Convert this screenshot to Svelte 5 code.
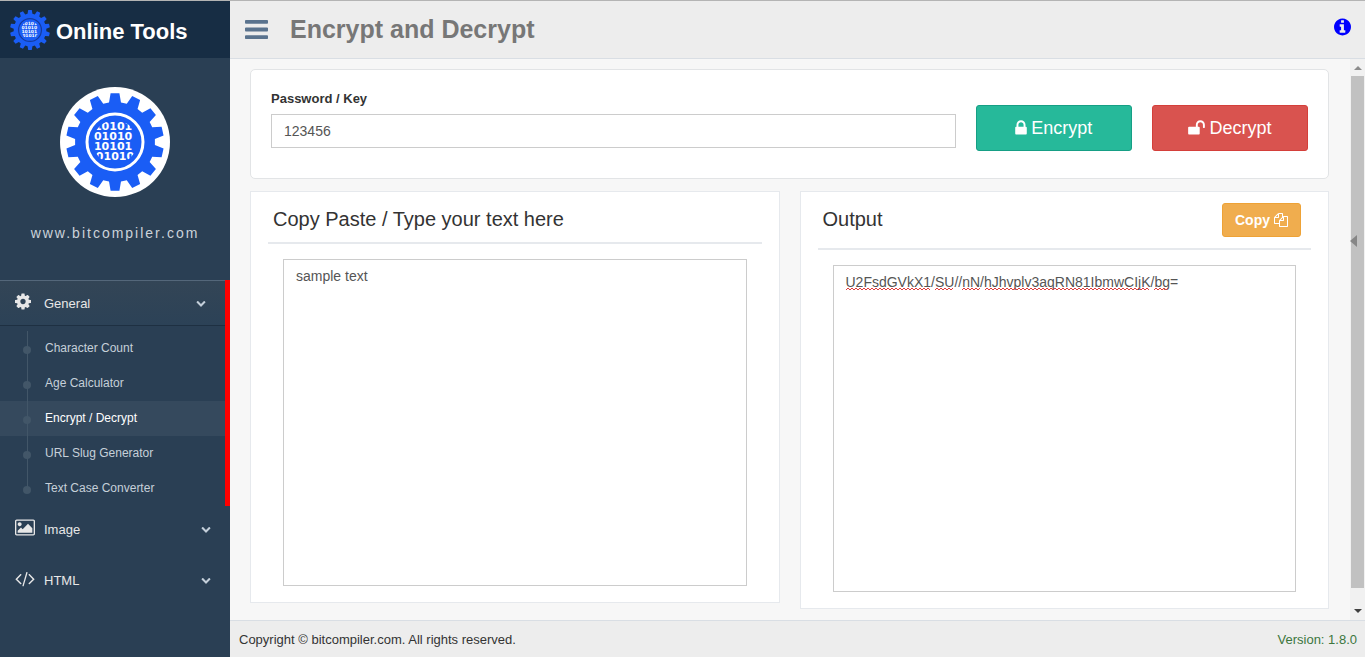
<script lang="ts">
  type MenuItem = { label: string; icon: string; children?: string[] };

  const icons: Record<string, { w: number; d: string }> = {
    lock: { w: 1152, d: 'M320 768h512v-192q0-106-75-181t-181-75-181 75-75 181v192zm832 96v576q0 40-28 68t-68 28h-960q-40 0-68-28t-28-68v-576q0-40 28-68t68-28h32v-192q0-184 132-316t316-132 316 132 132 316v192h32q40 0 68 28t28 68z' },
    unlock: { w: 1664, d: 'M1664 576v256q0 26-19 45t-45 19h-64q-26 0-45-19t-19-45v-256q0-106-75-181t-181-75-181 75-75 181v192h96q40 0 68 28t28 68v576q0 40-28 68t-68 28h-960q-40 0-68-28t-28-68v-576q0-40 28-68t68-28h672v-192q0-185 131.5-316.5t316.500-131.500 316.500 131.500 131.500 316.500z' },
    bars: { w: 1536, d: 'M1536 1344v128q0 26-19 45t-45 19h-1408q-26 0-45-19t-19-45v-128q0-26 19-45t45-19h1408q26 0 45 19t19 45zm0-512v128q0 26-19 45t-45 19h-1408q-26 0-45-19t-19-45v-128q0-26 19-45t45-19h1408q26 0 45 19t19 45zm0-512v128q0 26-19 45t-45 19h-1408q-26 0-45-19t-19-45v-128q0-26 19-45t45-19h1408q26 0 45 19t19 45z' },
    cog: { w: 1536, d: 'M1024 896q0-106-75-181t-181-75-181 75-75 181 75 181 181 75 181-75 75-181zm512-109v222q0 12-8 23t-20 13l-185 28q-19 54-39 91 35 50 107 138 10 12 10 25t-9 23q-27 37-99 108t-94 71q-12 0-26-9l-138-108q-44 23-91 38-16 136-29 186-7 28-36 28h-222q-14 0-24.500-8.500t-11.500-21.500l-28-184q-49-16-90-37l-141 107q-10 9-25 9-14 0-25-11-126-114-165-168-7-10-7-23 0-12 8-23 15-21 51-66.500t54-70.500q-27-50-41-99l-183-27q-13-2-21-12.500t-8-23.500v-222q0-12 8-23t19-13l186-28q14-46 39-92-40-57-107-138-10-12-10-24 0-10 9-23 26-36 98.500-107.500t94.500-71.500q13 0 26 10l138 107q44-23 91-38 16-136 29-186 7-28 36-28h222q14 0 24.500 8.500t11.500 21.500l28 184q49 16 90 37l142-107q9-9 24-9 13 0 25 10 129 119 165 170 7 8 7 22 0 12-8 23-15 21-51 66.500t-54 70.500q26 50 41 98l183 28q13 2 21 12.500t8 23.500z' },
    picture: { w: 1920, d: 'M640 576q0 80-56 136t-136 56-136-56-56-136 56-136 136-56 136 56 56 136zm1024 384v448h-1408v-192l320-320 160 160 512-512zm96-704h-1600q-13 0-22.500 9.500t-9.500 22.500v1216q0 13 9.500 22.500t22.500 9.500h1600q13 0 22.500-9.500t9.500-22.500v-1216q0-13-9.500-22.500t-22.500-9.500zm160 32v1216q0 66-47 113t-113 47h-1600q-66 0-113-47t-47-113v-1216q0-66 47-113t113-47h1600q66 0 113 47t47 113z' },
    code: { w: 1920, d: 'M617 1399l-50 50q-10 10-23 10t-23-10l-466-466q-10-10-10-23t10-23l466-466q10-10 23-10t23 10l50 50q10 10 10 23t-10 23l-393 393 393 393q10 10 10 23t-10 23zm591-1067l-373 1291q-4 13-15.500 19.500t-23.500 2.500l-62-17q-13-4-19.500-15.500t-2.500-24.500l373-1291q4-13 15.500-19.500t23.500-2.500l62 17q13 4 19.500 15.500t2.500 24.500zm657 651l-466 466q-10 10-23 10t-23-10l-50-50q-10-10-10-23t10-23l393-393-393-393q-10-10-10-23t10-23l50-50q10-10 23-10t23 10l466 466q10 10 10 23t-10 23z' },
    chevron: { w: 1792, d: 'M1683 808l-742 741q-19 19-45 19t-45-19l-742-741q-19-19-19-45.500t19-45.500l166-165q19-19 45-19t45 19l531 531 531-531q19-19 45-19t45 19l166 165q19 19 19 45.500t-19 45.500z' },
    info: { w: 1536, d: 'M1024 1376v-160q0-14-9-23t-23-9h-96v-512q0-14-9-23t-23-9h-320q-14 0-23 9t-9 23v160q0 14 9 23t23 9h96v320h-96q-14 0-23 9t-9 23v160q0 14 9 23t23 9h448q14 0 23-9t9-23zm-128-896v-160q0-14-9-23t-23-9h-192q-14 0-23 9t-9 23v160q0 14 9 23t23 9h192q14 0 23-9t9-23zm640 416q0 209-103 385.500t-279.500 279.500-385.500 103-385.500-103-279.500-279.500-103-385.500 103-385.500 279.500-279.500 385.500-103 385.500 103 279.500 279.500 103 385.500z' },
    copy: { w: 1792, d: 'M1696 384q40 0 68 28t28 68v1216q0 40-28 68t-68 28h-960q-40 0-68-28t-28-68v-288h-544q-40 0-68-28t-28-68v-672q0-40 20-88t48-76l408-408q28-28 76-48t88-20h416q40 0 68 28t28 68v328q68-40 128-40h416zm-544 213l-299 299h299v-299zm-640-384l-299 299h299v-299zm196 647l316-316v-416h-384v416q0 40-28 68t-68 28h-416v640h512v-256q0-40 20-88t48-76zm956 804v-1152h-384v416q0 40-28 68t-68 28h-416v640h896z' }
  };

  const menu: MenuItem[] = [
    {
      label: 'General',
      icon: 'cog',
      children: ['Character Count', 'Age Calculator', 'Encrypt / Decrypt', 'URL Slug Generator', 'Text Case Converter']
    },
    { label: 'Image', icon: 'picture' },
    { label: 'HTML', icon: 'code' }
  ];

  let openMenu = $state('General');
  let current = $state('Encrypt / Decrypt');
  let password = $state('123456');
  let input = $state('sample text');
  let output = $state('U2FsdGVkX1/SU//nN/hJhvplv3aqRN81IbmwCIjK/bg=');

  // start and end of each misspelled run in the output
  const misspelled = [[0, 85], [89, 108], [116, 134], [139, 304], [308, 323]];

  function squiggle(from: number, to: number) {
    let d = `M${from} 3`;
    for (let x = from + 2, up = true; x <= to; x += 2, up = !up) {
      d += `L${x} ${up ? 1 : 3}`;
    }
    return d;
  }

  // gear outline, one trapezoid per tooth
  function gear(teeth: number, inner: number, outer: number) {
    const pts: string[] = [];
    for (let i = 0; i < teeth; i++) {
      const a = (i * 2 * Math.PI) / teeth - Math.PI / 2;
      for (const [off, r] of [[-0.15, inner], [-0.09, outer], [0.09, outer], [0.15, inner]]) {
        pts.push(`${(r * Math.cos(a + off)).toFixed(2)},${(r * Math.sin(a + off)).toFixed(2)}`);
      }
    }
    return pts.join(' ');
  }
</script>

{#snippet icon(name: string, height: number)}
  <svg class="icon" viewBox="0 0 {icons[name].w} 1792" {height} width={Math.round((icons[name].w * height) / 1792)} aria-hidden="true">
    <path fill="currentColor" d={icons[name].d} />
  </svg>
{/snippet}

{#snippet logo(size: number, ring: string, id: string)}
  <svg class="logo" width={size} height={size} viewBox="-49 -49 98 98" aria-hidden="true">
    <clipPath {id}><circle r="22" /></clipPath>
    <polygon points={gear(14, 40, 49)} fill="#1a5df5" />
    <circle r="28" fill="none" stroke={ring} stroke-width="3" />
    <g clip-path="url(#{id})">
      <text class="bits">
        <tspan x="0" y="-12">10101</tspan>
        <tspan x="0" y="-2">01010</tspan>
        <tspan x="0" y="8">10101</tspan>
        <tspan x="0" y="18">01010</tspan>
      </text>
    </g>
  </svg>
{/snippet}

<div class="page">
  <aside class="sidebar">
    <a class="brand" href="#home">
      {@render logo(40, '#153a9c', 'bits-small')}
      <span>Online Tools</span>
    </a>
    <div class="profile">
      <div class="avatar">{@render logo(98, '#fff', 'bits-large')}</div>
      <a class="site" href="#site">www.bitcompiler.com</a>
    </div>
    <ul class="menu">
      {#each menu as item}
        <li class:active={openMenu === item.label}>
          <button class="menu-link" onclick={() => (openMenu = item.label)}>
            <span class="menu-icon">{@render icon(item.icon, 19)}</span>
            <span class="menu-label">{item.label}</span>
            {@render icon('chevron', 10)}
          </button>
          {#if item.children && openMenu === item.label}
            <ul class="submenu">
              {#each item.children as child}
                <li class:current={current === child}>
                  <a href="#tool" onclick={() => (current = child)}>{child}</a>
                </li>
              {/each}
            </ul>
          {/if}
        </li>
      {/each}
    </ul>
  </aside>

  <div class="main">
    <header class="topbar">
      <button class="toggle" aria-label="Toggle menu">{@render icon('bars', 27)}</button>
      <h1>Encrypt and Decrypt</h1>
      <a class="info" href="#info" aria-label="Info">{@render icon('info', 20)}</a>
    </header>

    <div class="body">
      <main class="content">
        <section class="card">
          <div class="field">
            <label for="password">Password / Key</label>
            <input id="password" type="text" bind:value={password} />
          </div>
          <button class="btn encrypt">{@render icon('lock', 18)}<span>Encrypt</span></button>
          <button class="btn decrypt">{@render icon('unlock', 18)}<span>Decrypt</span></button>
        </section>

        <div class="panels">
          <section class="panel">
            <div class="panel-title">
              <h2><label for="input">Copy Paste / Type your text here</label></h2>
            </div>
            <div class="panel-body">
              <textarea id="input" bind:value={input} spellcheck="false"></textarea>
            </div>
          </section>
          <section class="panel">
            <div class="panel-title">
              <h2><label for="output">Output</label></h2>
              <button class="btn copy"><span>Copy</span>{@render icon('copy', 14)}</button>
            </div>
            <div class="panel-body">
              <textarea id="output" bind:value={output} spellcheck="false"></textarea>
              <svg class="spelling" width="324" height="4" aria-hidden="true">
                {#each misspelled as [from, to]}
                  <path d={squiggle(from, to)} />
                {/each}
              </svg>
            </div>
          </section>
        </div>
      </main>

      <div class="scrollbar">
        <svg width="8" height="4" viewBox="0 0 8 4"><path d="M0 4L4 0L8 4z" fill="#8b8b8b" /></svg>
        <div class="thumb"></div>
        <svg width="8" height="4" viewBox="0 0 8 4"><path d="M0 0L4 4L8 0z" fill="#404040" /></svg>
        <svg class="handle" width="7" height="12" viewBox="0 0 7 12"><path d="M7 0L0 6L7 12z" fill="#868686" /></svg>
      </div>
    </div>

    <footer>
      <span>Copyright © bitcompiler.com. All rights reserved.</span>
      <span class="version">Version: 1.8.0</span>
    </footer>
  </div>
</div>

<style>
  :global(body) {
    margin: 0;
    background: #f7f7f7;
    font-family: "Liberation Sans", Arial, sans-serif;
    font-size: 13px;
    color: #333;
  }
  * {
    box-sizing: border-box;
  }
  button, input, textarea {
    font-family: inherit;
    margin: 0;
  }
  a {
    text-decoration: none;
  }
  .icon, .logo {
    display: block;
    flex: none;
  }
  .page {
    display: flex;
    min-height: 100vh;
    border-top: 1px solid #b4b4b4;
  }

  /* sidebar */
  .sidebar {
    flex: none;
    width: 230px;
    background: #2a3f54;
  }
  .brand {
    display: flex;
    align-items: center;
    gap: 6px;
    height: 57px;
    padding-left: 10px;
    background: #172d44;
    color: #fff;
    font-size: 22px;
    font-weight: bold;
  }
  .brand span {
    padding-top: 4px;
  }
  .bits {
    fill: #fff;
    font-family: "DejaVu Sans", sans-serif;
    font-size: 11px;
    font-weight: bold;
    text-anchor: middle;
  }
  .profile {
    display: flex;
    flex-direction: column;
    align-items: center;
    height: 222px;
    padding-top: 29px;
  }
  .avatar {
    display: flex;
    align-items: center;
    justify-content: center;
    width: 110px;
    height: 110px;
    border-radius: 50%;
    background: #fff;
  }
  .site {
    margin-top: 28px;
    color: #ccd3da;
    font-size: 14px;
    line-height: 16px;
    letter-spacing: 2px;
  }
  .menu, .submenu {
    margin: 0;
    padding: 0;
    list-style: none;
  }
  .menu > li.active {
    border-right: 5px solid #f00;
  }
  .menu-link {
    display: flex;
    align-items: center;
    width: 100%;
    height: 46px;
    margin-bottom: 5px;
    padding: 0 19px 0 15px;
    border: 0;
    background: none;
    color: #e7e7e7;
    font-size: 13px;
    text-align: left;
  }
  .active .menu-link {
    border-top: 1px solid #54677a;
    border-bottom: 1px solid #1e3042;
    background: linear-gradient(#334556, #2c4257);
  }
  .menu-icon {
    width: 29px;
    padding-bottom: 4px;
  }
  .menu-label {
    flex: 1;
  }
  .menu-link > :global(.icon) {
    color: #c4cfda;
  }
  .submenu li {
    position: relative;
    height: 35px;
  }
  .submenu li::before {
    content: "";
    position: absolute;
    top: 15px;
    left: 23px;
    width: 8px;
    height: 8px;
    border-radius: 50%;
    background: #425668;
  }
  .submenu li::after {
    content: "";
    position: absolute;
    top: 0;
    bottom: 0;
    left: 27px;
    border-left: 1px solid #425668;
  }
  .submenu li:last-child::after {
    bottom: 16px;
  }
  .submenu a {
    display: block;
    padding-left: 45px;
    color: #c6d0d9;
    font-size: 12px;
    line-height: 34px;
  }
  .submenu .current {
    background: #35495d;
  }
  .submenu .current a {
    color: #fff;
  }

  /* top bar */
  .main {
    display: flex;
    flex: 1;
    flex-direction: column;
    min-width: 0;
  }
  .topbar {
    display: flex;
    align-items: center;
    height: 58px;
    padding: 0 14px 0 15px;
    border-bottom: 1px solid #d9dee4;
    background: #ededed;
  }
  .toggle {
    margin-right: 22px;
    padding: 0;
    border: 0;
    background: none;
    color: #5a738e;
  }
  h1 {
    flex: 1;
    margin: 0;
    padding-bottom: 2px;
    color: #777;
    font-size: 25px;
    line-height: 28px;
  }
  .info {
    padding-bottom: 6px;
    color: #00f;
  }

  /* content */
  .body {
    display: flex;
    flex: 1;
  }
  .content {
    flex: 1;
    padding: 10px 21px 11px 20px;
  }
  .card {
    display: grid;
    grid-template-columns: repeat(12, 1fr);
    gap: 20px;
    align-items: start;
    margin-bottom: 12px;
    padding: 20px 20px 27px;
    border: 1px solid #e2e4e6;
    border-radius: 5px;
    background: #fff;
  }
  .field {
    grid-column: span 8;
  }
  .field label {
    display: block;
    margin-bottom: 6px;
    font-weight: bold;
    line-height: 18px;
  }
  .field input {
    display: block;
    width: 100%;
    height: 34px;
    padding: 0 12px;
    border: 1px solid #ccc;
    color: #555;
    font-size: 14px;
  }
  .btn {
    display: flex;
    align-items: center;
    justify-content: center;
    gap: 4px;
    border: 1px solid;
    border-radius: 3px;
    color: #fff;
  }
  .encrypt, .decrypt {
    grid-column: span 2;
    height: 46px;
    margin-top: 15px;
    font-size: 18px;
  }
  .encrypt {
    border-color: #169f85;
    background: #26b99a;
  }
  .decrypt {
    border-color: #d43f3a;
    background: #d9534f;
  }
  .copy {
    height: 34px;
    margin-right: 10px;
    padding: 0 12px;
    border-color: #eea236;
    background: #f0ad4e;
    font-size: 14px;
    font-weight: bold;
  }
  .panels {
    display: grid;
    grid-template-columns: 1fr 1fr;
    gap: 20px;
    align-items: start;
  }
  .panel {
    padding: 11px 17px 16px;
    border: 1px solid #e6e9ed;
    background: #fff;
  }
  .panel-title {
    display: flex;
    justify-content: space-between;
    align-items: flex-start;
    padding: 0 0 11px 5px;
    border-bottom: 2px solid #e6e9ed;
  }
  h2 {
    margin: 0;
    padding-top: 4px;
    font-size: 20px;
    font-weight: normal;
    line-height: 24px;
  }
  .panel-body {
    position: relative;
    padding: 15px 15px 0;
  }
  textarea {
    display: block;
    width: 100%;
    height: 327px;
    padding: 6px 12px;
    border: 1px solid #ccc;
    color: #555;
    font-size: 14px;
    line-height: 20px;
    resize: none;
  }
  .spelling {
    position: absolute;
    top: 37px;
    left: 28px;
  }
  .spelling path {
    fill: none;
    stroke: #e03c3c;
    stroke-width: 1;
  }
  .scrollbar {
    position: relative;
    display: flex;
    flex: none;
    flex-direction: column;
    align-items: center;
    gap: 6px;
    width: 15px;
    padding: 7px 1px;
    background: #f1f1f1;
  }
  .thumb {
    flex: 1;
    width: 13px;
    margin-bottom: 15px;
    background: #c1c1c1;
  }
  .handle {
    position: absolute;
    top: 176px;
    left: 0;
  }
  footer {
    display: flex;
    justify-content: space-between;
    align-items: center;
    height: 37px;
    padding: 0 8px 0 9px;
    border-top: 1px solid #d9dee4;
    background: #ededed;
  }
  .version {
    color: #3c763d;
  }
</style>
